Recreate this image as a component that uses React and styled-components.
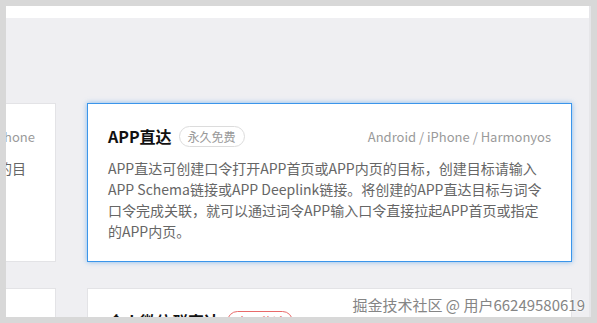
import React from 'react'
import styled, { createGlobalStyle } from 'styled-components'

const cards = [
    [
        {
            title: 'H5直达',
            tag: '永久免费',
            platform: 'Android / iPhone',
            desc: '微信直达可创建口令打开微信公众号文章小程序首页或小程序内页的目标，创建目标请输入页面链接。',
        },
        {
            title: 'APP直达',
            tag: '永久免费',
            platform: 'Android / iPhone / Harmonyos',
            desc: 'APP直达可创建口令打开APP首页或APP内页的目标，创建目标请输入APP Schema链接或APP Deeplink链接。将创建的APP直达目标与词令口令完成关联，就可以通过词令APP输入口令直接拉起APP首页或指定的APP内页。',
            active: true,
        },
    ],
    [
        {
            title: '微信直达',
            tag: '永久免费',
            platform: 'Android / iPhone',
            desc: '微信直达可创建口令打开微信公众号文章小程序首页或小程序内页的目标。',
        },
        {
            title: '个人微信群直达',
            tag: '今日秒杀',
            hot: true,
            platform: 'Android / iPhone / Harmonyos / iPad',
            desc: '个人微信群直达可创建口令打开个人微信群的目标。',
        },
    ],
]

const App = () => {
    return (
        <>
            <GlobalStyle />
            <Frame>
                <Window>
                    <Header />
                    <Body>
                        {cards.map((row, i) => (
                            <Track key={i}>
                                {row.map((card) => (
                                    <Card key={card.title} $active={card.active}>
                                        <CardHead>
                                            <Title>{card.title}</Title>
                                            <Tag $hot={card.hot}>{card.tag}</Tag>
                                            <Platform>{card.platform}</Platform>
                                        </CardHead>
                                        <Desc>{card.desc}</Desc>
                                    </Card>
                                ))}
                            </Track>
                        ))}
                    </Body>
                    <Watermark>掘金技术社区 @ 用户66249580619</Watermark>
                </Window>
            </Frame>
        </>
    )
}

export default App


const GlobalStyle = createGlobalStyle`
    * {
        box-sizing: border-box;
    }
    body {
        margin: 0;
        font-family: "Noto Sans CJK SC", "Noto Sans", sans-serif;
    }
`;

const Frame = styled.div`
    width: 597px;
    height: 323px;
    background: #d8d8d8;
    padding: 6px 6px 6px 6px;
`;

const Window = styled.div`
    position: relative;
    width: 585px;
    height: 311px;
    overflow: hidden;
    background: #efeff2;
    border-right: 2px solid #e6e6e9;
`;

const Header = styled.div`
    height: 12px;
    background: #fff;
`;

const Body = styled.div`
    padding-top: 85px;
    display: flex;
    flex-direction: column;
    gap: 26px;
`;

// the row is scrolled sideways, so the first card sits mostly off the left edge
const Track = styled.div`
    display: flex;
    gap: 31px;
    margin-left: -435px;
`;

const Card = styled.div`
    flex: 0 0 485px;
    height: 159px;
    background: #fff;
    border: 1px solid ${(p) => (p.$active ? '#3b95ea' : '#e3e3e6')};
    box-shadow: ${(p) => (p.$active ? '0 0 5px rgba(59, 149, 234, 0.6)' : 'none')};
    padding: 21px 20px 0 20px;
`;

const CardHead = styled.div`
    display: flex;
    align-items: center;
    height: 22px;
`;

const Title = styled.h3`
    margin: 0;
    font-size: 16px;
    font-weight: 700;
    color: #111;
    line-height: 22px;
`;

const Tag = styled.span`
    margin-left: 7px;
    height: 21px;
    padding: 0 8px;
    border: 1px solid ${(p) => (p.$hot ? '#e86a6a' : '#dcdcdc')};
    border-radius: 11px;
    font-size: 12px;
    line-height: 19px;
    color: ${(p) => (p.$hot ? '#e35050' : '#999')};
`;

const Platform = styled.span`
    margin-left: auto;
    font-size: 13px;
    color: #9a9a9a;
`;

const Desc = styled.p`
    margin: 11px 0 0;
    font-size: 14px;
    line-height: 21px;
    color: #666;
`;

const Watermark = styled.div`
    position: absolute;
    right: 4px;
    bottom: 3px;
    font-size: 15px;
    line-height: 18px;
    color: #858585;
    text-shadow: 0 0 2px #fff, 0 0 2px #fff, 0 0 1px #fff;
`;
